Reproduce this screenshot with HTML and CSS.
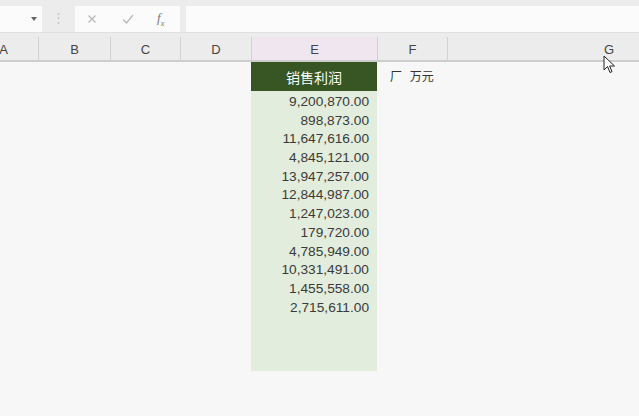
FILE: index.html
```html
<!DOCTYPE html>
<html>
<head>
<meta charset="utf-8">
<link rel="stylesheet" href="styles.css">
</head>
<body>
<div class="app">
  <div class="formula-bar">
    <div class="name-box"><span class="caret"></span></div>
    <div class="grip">⋮</div>
    <div class="fx-box">
      <svg class="ico" width="10" height="10" viewBox="0 0 10 10"><path d="M1.5 1.5 L8.5 8.5 M8.5 1.5 L1.5 8.5" stroke="#b8b8b8" stroke-width="1.2" fill="none"/></svg>
      <svg class="ico" width="12" height="10" viewBox="0 0 12 10"><path d="M1 5.5 L4.5 9 L11 1" stroke="#b8b8b8" stroke-width="1.2" fill="none"/></svg>
      <span class="fx"><i>f</i><sub>x</sub></span>
    </div>
    <div class="input-box"></div>
  </div>
  <div class="strip"></div>
  <div class="col-headers">
    <div class="ch ch-a">A</div>
    <div class="ch ch-b">B</div>
    <div class="ch ch-c">C</div>
    <div class="ch ch-d">D</div>
    <div class="ch ch-e">E</div>
    <div class="ch ch-f">F</div>
    <div class="ch ch-g">G</div>
  </div>
  <div class="sheet">
    <div class="spacer"></div>
    <div class="col-e">
      <div class="head">销售利润</div>
      <div class="num">9,200,870.00</div>
      <div class="num">898,873.00</div>
      <div class="num">11,647,616.00</div>
      <div class="num">4,845,121.00</div>
      <div class="num">13,947,257.00</div>
      <div class="num">12,844,987.00</div>
      <div class="num">1,247,023.00</div>
      <div class="num">179,720.00</div>
      <div class="num">4,785,949.00</div>
      <div class="num">10,331,491.00</div>
      <div class="num">1,455,558.00</div>
      <div class="num">2,715,611.00</div>
      <div class="num"></div>
      <div class="num"></div>
      <div class="num"></div>
    </div>
    <div class="col-f"><div class="unit">厂 万元</div></div>
  </div>
  <svg class="cursor" width="14" height="20" viewBox="0 0 14 20"><path d="M1 1 L1 15 L4.5 11.5 L7 17.5 L9 16.6 L6.6 11 L11.5 11 Z" fill="#fff" stroke="#222" stroke-width="1"/></svg>
</div>
</body>
</html>
```
FILE: styles.css
```css
html, body { margin: 0; padding: 0; }
body {
  width: 639px;
  height: 416px;
  overflow: hidden;
  background: #f7f7f7;
  font-family: "Liberation Sans", Arial, "Noto Sans CJK SC", sans-serif;
}
.app { position: relative; width: 639px; height: 416px; overflow: hidden; }

.formula-bar {
  display: flex;
  align-items: stretch;
  height: 26px;
  padding: 6px 0 0 0;
  background: #ececec;
}
.name-box {
  width: 42px;
  background: #fbfbfb;
  position: relative;
}
.caret {
  position: absolute;
  left: 31px;
  top: 11px;
  width: 0; height: 0;
  border-left: 3.5px solid transparent;
  border-right: 3.5px solid transparent;
  border-top: 4px solid #666;
}
.grip {
  width: 33px;
  text-align: center;
  color: #c4c4c4;
  font-size: 13px;
  line-height: 24px;
}
.fx-box {
  width: 105px;
  background: #fbfbfb;
  display: flex;
  align-items: center;
  padding-left: 12px;
  box-sizing: border-box;
}
.fx-box .ico:first-child { margin-right: 25px; }
.fx-box .ico:nth-child(2) { margin-right: 23px; }
.fx {
  font-family: "Liberation Serif", serif;
  color: #777;
  font-size: 13px;
}
.fx sub { font-size: 8px; font-style: italic; }
.input-box {
  flex: 1;
  margin-left: 6px;
  background: #fbfbfb;
}
.strip { height: 4px; background: #ececec; border-top: 1px solid #e0e0e0; }

.col-headers {
  display: flex;
  height: 23px;
  background: #ececec;
  border-bottom: 2px solid #cdcdcd;
}
.ch {
  flex: none;
  box-sizing: border-box;
  border-right: 1px solid #d2d2d2;
  text-align: center;
  font-size: 13px;
  line-height: 26px;
  color: #444;
}
.ch-a { width: 70px; margin-left: -31px; }
.ch-b { width: 72px; }
.ch-c { width: 70px; }
.ch-d { width: 71px; }
.ch-e { width: 126px; background: #efe6ef; }
.ch-f { width: 70px; }
.ch-g { width: 322px; border-right: none; }

.sheet {
  display: flex;
  align-items: flex-start;
}
.spacer { width: 251px; flex: none; }
.col-e {
  width: 126px;
  flex: none;
  background: #e3eddd;
}
.head {
  height: 29px;
  background: #375623;
  color: #fff;
  font-size: 14px;
  line-height: 30px;
  text-align: center;
  font-family: "Noto Sans CJK SC", sans-serif;
}
.num {
  height: 18.7px;
  line-height: 21px;
  text-align: right;
  padding-right: 8px;
  font-size: 13.7px;
  color: #3a3a3a;
}
.col-f { padding: 6px 0 0 13px; }
.unit {
  font-size: 12px;
  color: #333;
  font-family: "Noto Sans CJK SC", sans-serif;
  line-height: 16px;
  word-spacing: 5px;
}
.cursor { position: absolute; left: 603px; top: 55px; }
```
